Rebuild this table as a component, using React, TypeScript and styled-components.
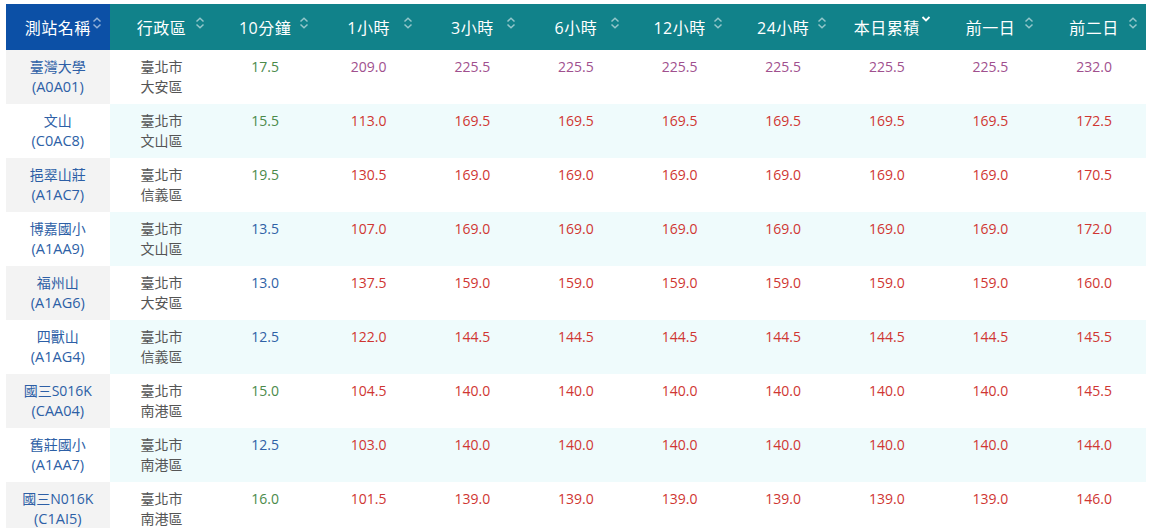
import React from 'react'
import { createGlobalStyle, styled } from 'styled-components'

const GlobalStyle = createGlobalStyle`
  html, body {
    margin: 0;
    padding: 0;
    background: #fff;
  }
  body {
    font-family: "Open Sans", "Noto Sans CJK TC", sans-serif;
  }
`

const Page = styled.div`
  padding: 4px 6px;
`

const Table = styled.table`
  width: 1140px;
  table-layout: fixed;
  border-collapse: collapse;
  border-spacing: 0;
`

const HeadCell = styled.th<{ $first?: boolean }>`
  position: relative;
  height: 46px;
  padding: 0;
  background-color: ${p => (p.$first ? '#0c50a6' : '#11828a')};
  color: #fff;
  font-size: 16px;
  font-weight: 400;
  letter-spacing: 0.5px;
  text-align: center;
  vertical-align: middle;
`

const SortIcon = styled.span<{ $active?: boolean }>`
  position: absolute;
  right: 8px;
  top: ${p => (p.$active ? '10px' : '13px')};
  width: 10px;
  height: 12px;
  display: flex;
  color: ${p => (p.$active ? '#ffffff' : 'rgba(255,255,255,0.55)')};
`

const Row = styled.tr<{ $odd: boolean }>`
  background-color: ${p => (p.$odd ? '#effbfc' : '#ffffff')};
`

const Cell = styled.td`
  height: 54px;
  padding: 7px 4px 0;
  box-sizing: border-box;
  vertical-align: top;
  text-align: center;
  font-size: 14px;
  line-height: 20px;
`

const StationCell = styled(Cell)<{ $odd: boolean }>`
  background-color: ${p => (p.$odd ? '#ffffff' : '#f3f3f3')};
  color: #2d5fa6;
`

const Code = styled.span`
  font-size: 14.5px;
`

const AreaCell = styled(Cell)`
  color: #555;
`

type Level = 'green' | 'blue' | 'red' | 'purple'

const levelColor: Record<Level, string> = {
  green: '#4b8a4b',
  blue: '#2f62a6',
  red: '#cf3632',
  purple: '#a0508e',
}

const Value = styled(Cell)<{ $level: Level }>`
  color: ${p => levelColor[p.$level]};
`

const UpDown = () => (
  <svg width="10" height="12" viewBox="0 0 10 12" fill="none" stroke="currentColor" strokeWidth="1.5">
    <path d="M1.5 4.5 L5 1.2 L8.5 4.5" />
    <path d="M1.5 7.5 L5 10.8 L8.5 7.5" />
  </svg>
)

const Down = () => (
  <svg width="10" height="12" viewBox="0 0 10 12" fill="none" stroke="currentColor" strokeWidth="1.8">
    <path d="M1.5 3 L5 6.5 L8.5 3" />
  </svg>
)

const headers = ['測站名稱', '行政區', '10分鐘', '1小時', '3小時', '6小時', '12小時', '24小時', '本日累積', '前一日', '前二日']

interface Station {
  name: string
  code: string
  city: string
  district: string
  values: number[]
}

const stations: Station[] = [
  { name: '臺灣大學', code: 'A0A01', city: '臺北市', district: '大安區', values: [17.5, 209.0, 225.5, 225.5, 225.5, 225.5, 225.5, 225.5, 232.0] },
  { name: '文山', code: 'C0AC8', city: '臺北市', district: '文山區', values: [15.5, 113.0, 169.5, 169.5, 169.5, 169.5, 169.5, 169.5, 172.5] },
  { name: '挹翠山莊', code: 'A1AC7', city: '臺北市', district: '信義區', values: [19.5, 130.5, 169.0, 169.0, 169.0, 169.0, 169.0, 169.0, 170.5] },
  { name: '博嘉國小', code: 'A1AA9', city: '臺北市', district: '文山區', values: [13.5, 107.0, 169.0, 169.0, 169.0, 169.0, 169.0, 169.0, 172.0] },
  { name: '福州山', code: 'A1AG6', city: '臺北市', district: '大安區', values: [13.0, 137.5, 159.0, 159.0, 159.0, 159.0, 159.0, 159.0, 160.0] },
  { name: '四獸山', code: 'A1AG4', city: '臺北市', district: '信義區', values: [12.5, 122.0, 144.5, 144.5, 144.5, 144.5, 144.5, 144.5, 145.5] },
  { name: '國三S016K', code: 'CAA04', city: '臺北市', district: '南港區', values: [15.0, 104.5, 140.0, 140.0, 140.0, 140.0, 140.0, 140.0, 145.5] },
  { name: '舊莊國小', code: 'A1AA7', city: '臺北市', district: '南港區', values: [12.5, 103.0, 140.0, 140.0, 140.0, 140.0, 140.0, 140.0, 144.0] },
  { name: '國三N016K', code: 'C1AI5', city: '臺北市', district: '南港區', values: [16.0, 101.5, 139.0, 139.0, 139.0, 139.0, 139.0, 139.0, 146.0] },
]

// 10-minute column: green from 15 up, blue below; others: purple from 200 up, red below
const levelOf = (v: number, tenMin: boolean): Level => {
  if (tenMin) return v >= 15 ? 'green' : 'blue'
  return v >= 200 ? 'purple' : 'red'
}

export default function App() {
  return (
    <Page>
      <GlobalStyle />
      <Table>
        <thead>
          <tr>
            {headers.map((h, i) => (
              <HeadCell key={h} $first={i === 0}>
                {h}
                <SortIcon $active={h === '本日累積'}>
                  {h === '本日累積' ? <Down /> : <UpDown />}
                </SortIcon>
              </HeadCell>
            ))}
          </tr>
        </thead>
        <tbody>
          {stations.map((s, r) => {
            const odd = r % 2 === 1
            return (
              <Row key={s.code} $odd={odd}>
                <StationCell $odd={odd}>
                  {s.name}
                  <br />
                  <Code>({s.code})</Code>
                </StationCell>
                <AreaCell>
                  {s.city}
                  <br />
                  {s.district}
                </AreaCell>
                {s.values.map((v, i) => (
                  <Value key={i} $level={levelOf(v, i === 0)}>
                    {v.toFixed(1)}
                  </Value>
                ))}
              </Row>
            )
          })}
        </tbody>
      </Table>
    </Page>
  )
}
